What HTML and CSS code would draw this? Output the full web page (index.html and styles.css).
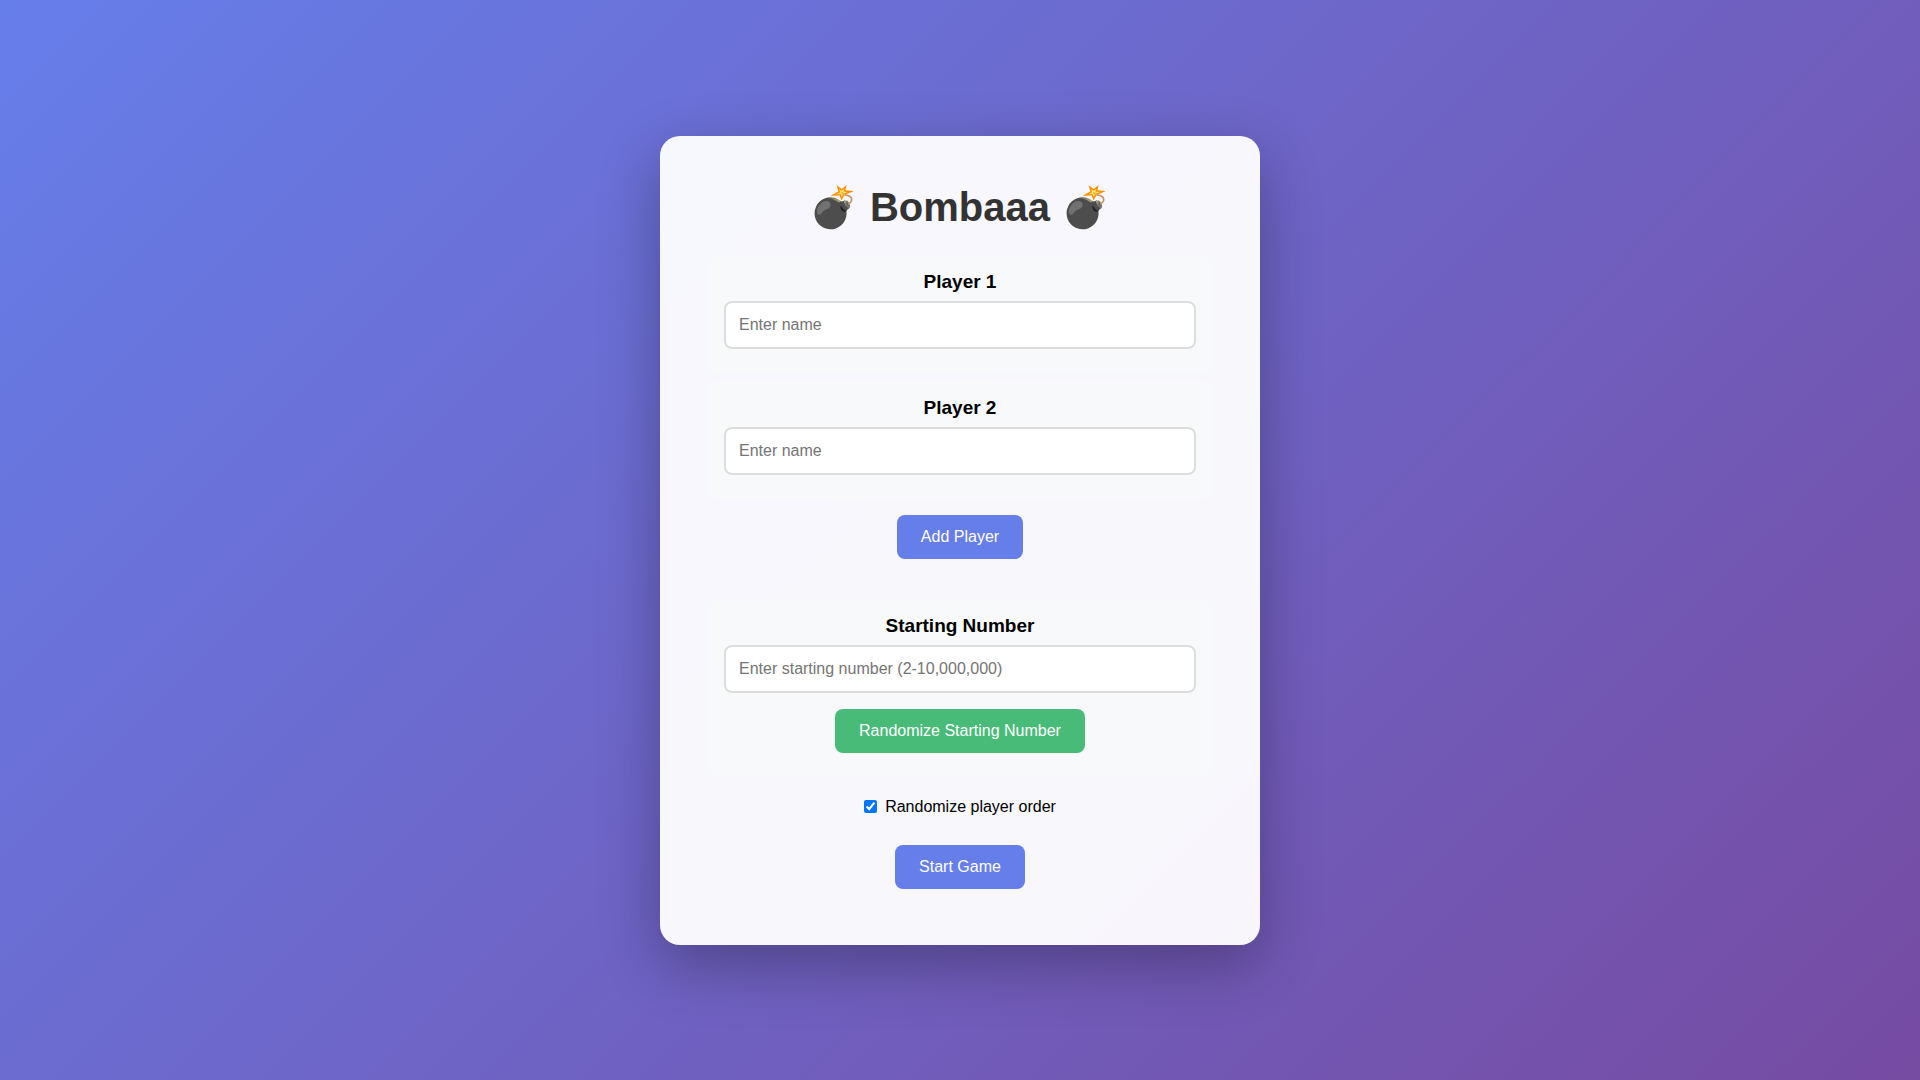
FILE: index.html
```html
<!DOCTYPE html>
<html lang="en">
<head>
<meta charset="UTF-8">
<meta name="viewport" content="width=device-width, initial-scale=1">
<title>Bombaaa</title>
<link rel="stylesheet" href="styles.css">
</head>
<body>
<main class="card">
  <h1 class="title">💣 Bombaaa 💣</h1>
  <form>
    <section class="panel">
      <label class="panel-label" for="player1">Player 1</label>
      <input class="field" id="player1" type="text" placeholder="Enter name">
    </section>
    <section class="panel">
      <label class="panel-label" for="player2">Player 2</label>
      <input class="field" id="player2" type="text" placeholder="Enter name">
    </section>
    <button class="button" type="button">Add Player</button>
    <section class="panel panel-number">
      <label class="panel-label" for="number">Starting Number</label>
      <input class="field" id="number" type="number" min="2" max="10000000" placeholder="Enter starting number (2-10,000,000)">
      <button class="button button-green" type="button">Randomize Starting Number</button>
    </section>
    <div class="option">
      <input type="checkbox" id="order" checked>
      <label for="order">Randomize player order</label>
    </div>
    <button class="button" type="button">Start Game</button>
  </form>
</main>
</body>
</html>
```

FILE: styles.css
```css
* {
  box-sizing: border-box;
  margin: 0;
  padding: 0;
}

body {
  display: flex;
  align-items: center;
  justify-content: center;
  min-height: 100vh;
  background: linear-gradient(135deg, #667eea 0%, #764ba2 100%);
  font-family: "Liberation Sans", Arial, sans-serif;
}

.card {
  width: 90%;
  max-width: 600px;
  padding: 48px;
  border-radius: 20px;
  background: rgba(255, 255, 255, 0.95);
  box-shadow: 0 20px 60px rgba(0, 0, 0, 0.3);
  text-align: center;
}

.title {
  margin-bottom: 24px;
  color: #333;
  font-size: 40px;
}

.panel {
  margin: 8px 0;
  padding: 16px;
  border-radius: 10px;
  background: #f8f9fa;
}

.panel-number {
  margin-top: 32px;
}

.panel-label {
  display: block;
  font-size: 19px;
  font-weight: bold;
  line-height: 22px;
}

.field {
  display: block;
  width: 100%;
  margin: 8px 0;
  padding: 13px;
  border: 2px solid #ddd;
  border-radius: 8px;
  font: inherit;
  font-size: 16px;
}

.button {
  margin: 8px;
  padding: 13px 24px;
  border: none;
  border-radius: 8px;
  background: #667eea;
  color: #fff;
  font: inherit;
  font-size: 16px;
  cursor: pointer;
}

.button-green {
  background: #48bb78;
}

.option {
  display: flex;
  align-items: center;
  justify-content: center;
  gap: 8px;
  margin: 21px 0;
}
```
